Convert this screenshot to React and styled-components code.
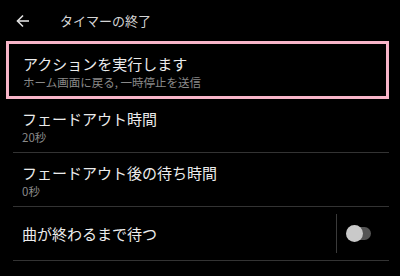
import React from 'react';
import styled, { createGlobalStyle } from 'styled-components';

const GlobalStyle = createGlobalStyle`
  html, body {
    margin: 0;
    padding: 0;
    background: #000;
  }
  body {
    font-family: "Noto Sans CJK JP", "Noto Sans", sans-serif;
    color: #e6e6e6;
  }
`;

const StyledPage = styled.div`
  width: 400px;
  height: 276px;
  background: #000;
  overflow: hidden;
`;

const StyledHeader = styled.div`
  display: flex;
  align-items: center;
  height: 41px;
  padding-left: 16px;
  box-sizing: border-box;
`;

const StyledBack = styled.div`
  display: flex;
  align-items: center;
  width: 44px;
  height: 16px;
`;

const StyledHeaderTitle = styled.div`
  font-size: 13px;
  line-height: 16px;
  color: #d4d4d4;
`;

const StyledList = styled.div`
  display: flex;
  flex-direction: column;
  padding: 0 11px 0 6px;
`;

const StyledFocused = styled.div`
  border: 3px solid #f8b5c9;
  padding: 10px 0 6px 14px;
`;

const StyledRow = styled.div`
  display: flex;
  align-items: center;
  margin: 0 0 0 7px;
  padding: ${({ single }) => (single ? '0 0 0 9px' : '10px 0 7px 9px')};
  height: ${({ single }) => (single ? '54px' : 'auto')};
  box-sizing: border-box;
  border-bottom: 1px solid #333;
`;

const StyledText = styled.div`
  flex: 1;
  display: flex;
  flex-direction: column;
`;

const StyledTitle = styled.div`
  font-size: 15px;
  line-height: 20px;
  color: #ececec;
  white-space: nowrap;
`;

const StyledSub = styled.div`
  font-size: 11.5px;
  line-height: 16px;
  color: #8a8a8a;
  white-space: nowrap;
`;

const StyledSep = styled.div`
  width: 1px;
  height: 39px;
  background: #3a3a3a;
  margin-top: -1px;
`;

const StyledSwitch = styled.div`
  position: relative;
  width: 25px;
  height: 17px;
  margin: 0 18px 0 9px;
  display: flex;
  align-items: center;
  justify-content: flex-end;
`;

const StyledTrack = styled.div`
  width: 20px;
  height: 13px;
  border-radius: 7px;
  background: #555;
`;

const StyledThumb = styled.div`
  position: absolute;
  left: 0;
  top: 0;
  width: 17px;
  height: 17px;
  border-radius: 50%;
  background: #c9c9c9;
`;

const BackArrow = () => (
  <svg width="14" height="14" viewBox="0 0 14 14" fill="none" stroke="#e0e0e0" strokeWidth="1.6">
    <path d="M13 7H1.5" />
    <path d="M7 1.5L1.5 7L7 12.5" />
  </svg>
);

const App = () => (
  <StyledPage>
    <GlobalStyle />
    <StyledHeader>
      <StyledBack>
        <BackArrow />
      </StyledBack>
      <StyledHeaderTitle>タイマーの終了</StyledHeaderTitle>
    </StyledHeader>
    <StyledList>
      <StyledFocused>
        <StyledTitle>アクションを実行します</StyledTitle>
        <StyledSub>ホーム画面に戻る, 一時停止を送信</StyledSub>
      </StyledFocused>
      <StyledRow>
        <StyledText>
          <StyledTitle>フェードアウト時間</StyledTitle>
          <StyledSub>20秒</StyledSub>
        </StyledText>
      </StyledRow>
      <StyledRow>
        <StyledText>
          <StyledTitle>フェードアウト後の待ち時間</StyledTitle>
          <StyledSub>0秒</StyledSub>
        </StyledText>
      </StyledRow>
      <StyledRow single>
        <StyledText>
          <StyledTitle>曲が終わるまで待つ</StyledTitle>
        </StyledText>
        <StyledSep />
        <StyledSwitch>
          <StyledTrack />
          <StyledThumb />
        </StyledSwitch>
      </StyledRow>
    </StyledList>
  </StyledPage>
);

export default App;
